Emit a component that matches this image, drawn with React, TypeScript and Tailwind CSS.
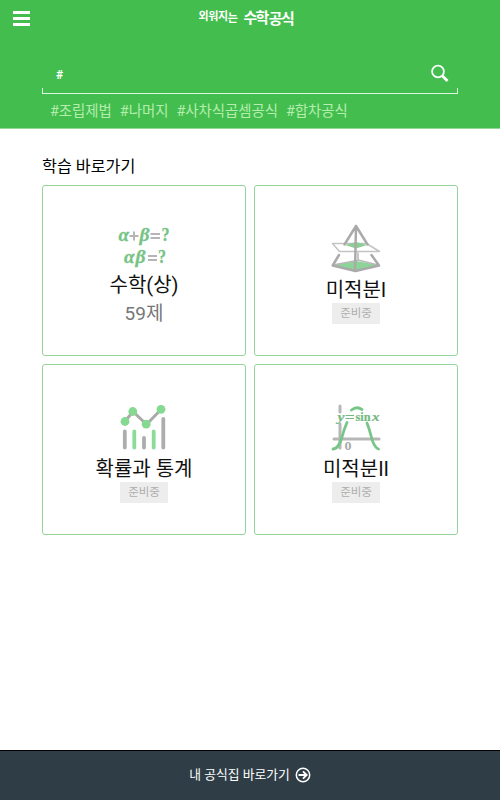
import React from "react";

const TAGS = ["#조립제법", "#나머지", "#사차식곱셈공식", "#합차공식"];

function EquationIcon() {
  return (
    <svg width="56" height="46" viewBox="0 0 56 46" className="font-['Liberation_Serif',serif]">
      <g fill="#76c485" stroke="#76c485" strokeWidth="0.3" fontSize="18.5" fontWeight="bold">
        <text x="2.500" y="17" fontStyle="italic" textLength="10.500" lengthAdjust="spacingAndGlyphs">α</text>
        <text x="23.500" y="17" fontStyle="italic" textLength="10" lengthAdjust="spacingAndGlyphs">β</text>
        <text x="45.500" y="17" textLength="8" lengthAdjust="spacingAndGlyphs">?</text>
        <text x="8" y="39" fontStyle="italic" textLength="10.500" lengthAdjust="spacingAndGlyphs">α</text>
        <text x="19.500" y="39" fontStyle="italic" textLength="10" lengthAdjust="spacingAndGlyphs">β</text>
        <text x="42" y="39" textLength="8" lengthAdjust="spacingAndGlyphs">?</text>
      </g>
      <path d="M13.500 12h9M18 7.500v9M34.500 10h9.500M34.500 14h9.500M32 32h9M32 36h9" stroke="#b5b5b5" strokeWidth="2" fill="none" />
    </svg>
  );
}

function PyramidIcon() {
  return (
    <svg width="50" height="50" viewBox="0 0 50 50" fill="none" strokeLinecap="round" strokeLinejoin="round">
      <path d="M1.500 41l24-4 22 4-22 6z" fill="#8bd596" />
      <path d="M14 19.500H1.500l7 8H48.500l-13-8z" stroke="#c4c4c4" strokeWidth="1.500" />
      <path d="M14 21l11-3 11 3-11 3.500z" fill="#8bcf94" />
      <path d="M27 29v7l20 5M26 36.500L2 41" stroke="#b8b8b8" strokeWidth="1.500" />
      <path d="M13.500 20.500L25 2l11.500 18.500M25 2l-1 45M8 31L1.700 41.500 24.500 47 48 41.500 40.500 31" stroke="#aaa" strokeWidth="2.500" />
    </svg>
  );
}

function ChartIcon() {
  return (
    <svg width="48" height="48" viewBox="0 0 48 48" fill="none" strokeLinecap="round">
      <path d="M5 18.500l8-10 13.500 13L41.500 6" stroke="#aaa" strokeWidth="3" />
      <path d="M4.800 28.500v16M24 35v9.500M43.300 16v28.500" stroke="#adadad" strokeWidth="3.800" />
      <path d="M14.300 28.500v16M33.700 28.500v16" stroke="#8bdc97" strokeWidth="3.800" />
      <g fill="#85d991">
        <circle cx="5" cy="18.500" r="4.400" />
        <circle cx="12.800" cy="8.500" r="4.400" />
        <circle cx="26.200" cy="21.200" r="4.400" />
        <circle cx="41" cy="6.300" r="4.400" />
      </g>
    </svg>
  );
}

function SineIcon() {
  return (
    <svg width="50" height="50" viewBox="0 0 50 50" fill="none" strokeLinecap="round" className="font-['Liberation_Serif',serif]">
      <path d="M9 3v6M9 21v24M3 36h45" stroke="#b7b7b7" strokeWidth="3" />
      <path d="M2 46c5-.5 7-5 9-12 1.500-6 3-10 5-14.500M20.500 7c3.500-3 7-3 10.500-.5M36 20c2 5 3 8.500 4.500 14.500 1.500 6 3 10 7 11.500" stroke="#76c687" strokeWidth="2.800" />
      <g fill="#76b982" stroke="#76b982" strokeWidth="0.200" fontSize="12" fontWeight="bold">
        <text x="6.500" y="17.500" fontStyle="italic" textLength="7" lengthAdjust="spacingAndGlyphs">y</text>
        <text x="24.500" y="17.500" textLength="15" lengthAdjust="spacingAndGlyphs">sin</text>
        <text x="41" y="17.500" fontStyle="italic" textLength="7.500" lengthAdjust="spacingAndGlyphs">x</text>
        <text x="13.500" y="47" fill="#aaa" stroke="none" textLength="7" lengthAdjust="spacingAndGlyphs">0</text>
      </g>
      <path d="M14.500 12.500h8.500M14.500 15.500h8.500" stroke="#76b982" strokeWidth="1.200" strokeLinecap="butt" />
    </svg>
  );
}

const CARD = "flex flex-col items-center rounded-[3px] border border-[#93d49b]";
const NAME = "whitespace-pre text-[20px] leading-[26px] text-[#111]";

function PendingCard({ icon, name }: { icon: React.ReactNode; name: string }) {
  return (
    <div className={`${CARD} pt-[38px]`}>
      <div className="h-[53px]">{icon}</div>
      <h3 className={NAME}>{name}</h3>
      <span className="h-[21px] w-12 bg-[#ededed] text-center text-[11.5px] leading-[20px] text-[#adadad]">준비중</span>
    </div>
  );
}

export default function App() {
  return (
    <div className="flex h-[800px] w-[500px] flex-col overflow-hidden bg-white font-[Roboto,'Noto_Sans_CJK_KR',sans-serif]">
      <header className="flex h-[129px] flex-col border-b border-[#92d998] bg-[#43be4e]">
        <div className="flex h-[38px] pl-[13px]">
          <button aria-label="메뉴" className="mt-[11px] flex h-[15px] w-[17px] flex-col justify-between">
            <span className="h-[3px] bg-white" />
            <span className="h-[3px] bg-white" />
            <span className="h-[3px] bg-white" />
          </button>
          <h1 className="ml-[168.5px] flex w-[96px] items-start whitespace-nowrap font-bold leading-6 text-white">
            <span className="pt-[5px] text-[11px] tracking-[-0.4px]">외워지</span>
            <span className="pt-[7px] text-[11px] tracking-[-0.4px]">는</span>
            <span className="ml-[6px] pt-[6px] text-[15px] tracking-[-1.6px]">수학</span>
            <span className="ml-px pt-[7px] text-[15px] tracking-[-1.6px]">공식</span>
          </h1>
        </div>
        <div className="mx-[42px] mt-[15px] flex h-[35px] items-center justify-between pl-[14px] pr-[8px] pt-1">
          <span className="mt-[5px] text-[12px] font-bold leading-4 text-white">#</span>
          <svg width="20" height="20" viewBox="0 0 20 20" fill="none" stroke="white">
            <circle cx="8" cy="8.500" r="5.900" strokeWidth="1.800" />
            <path d="M12 12.500l5.500 5.500" strokeWidth="2.800" />
          </svg>
        </div>
        <div className="mx-[42px] h-[6px] border-x border-b border-[#dcf6df]" />
        <div className="flex gap-2 whitespace-nowrap pl-[50px] pt-[6px] text-[14.4px] leading-[24px] text-[#b5edae]">
          {TAGS.map((tag) => (
            <span key={tag}>{tag}</span>
          ))}
        </div>
      </header>
      <main className="flex-1 px-[42px] pt-[26px]">
        <h2 className="h-[30px] text-[16.2px] leading-[24px] text-black">학습 바로가기</h2>
        <div className="grid grid-cols-2 grid-rows-[171px_171px] gap-2">
          <div className={`${CARD} pt-[38px]`}>
            <div className="h-[48px]"><EquationIcon /></div>
            <h3 className={NAME}>수학(상)</h3>
            <p className="mt-[3px] text-[19px] leading-[26px] text-[#777]">59제</p>
          </div>
          <PendingCard icon={<PyramidIcon />} name="미적분I" />
          <PendingCard icon={<ChartIcon />} name="확률과 통계" />
          <PendingCard icon={<SineIcon />} name="미적분II" />
        </div>
      </main>
      <footer className="flex h-[50px] items-center justify-center gap-[5px] border-t border-black bg-[#2f3e46] pb-px text-[12.8px] leading-5 text-white">
        <span>내 공식집 바로가기</span>
        <svg width="16" height="16" viewBox="0 0 16 16" fill="none" stroke="white" strokeWidth="1.900">
          <circle cx="8" cy="8" r="6.700" strokeWidth="1.500" />
          <path d="M3.500 8h8M8 4.300L11.700 8 8 11.700" />
        </svg>
      </footer>
    </div>
  );
}
